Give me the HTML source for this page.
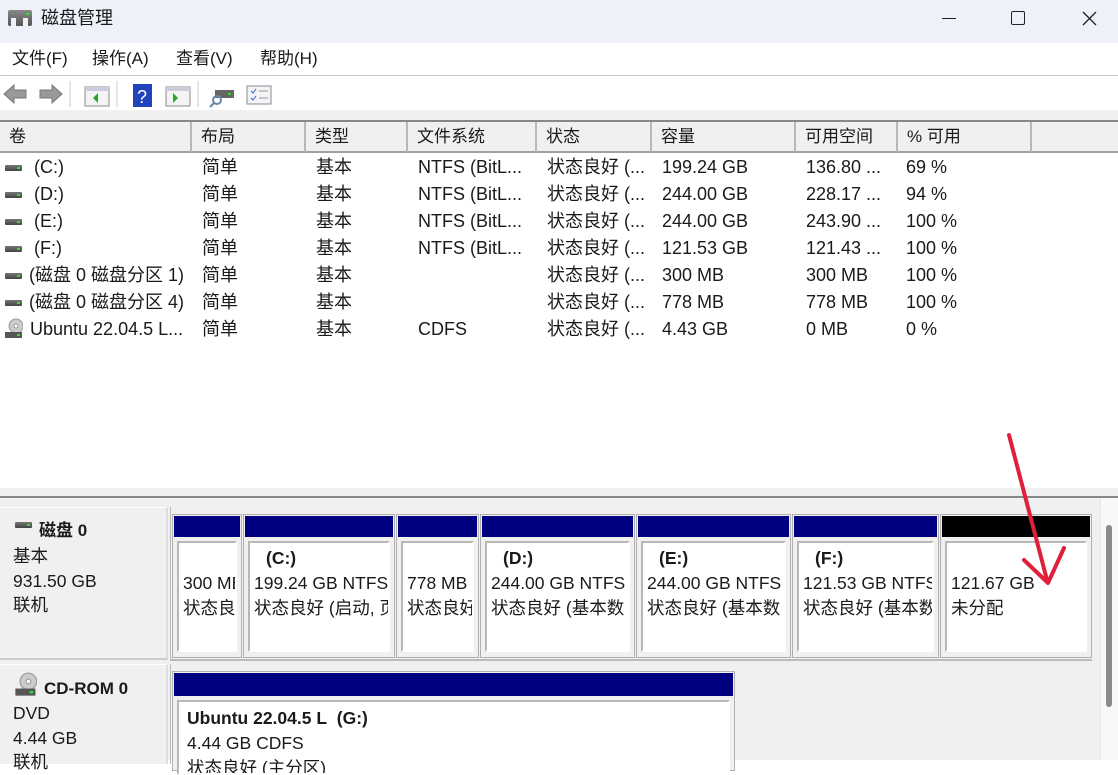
<!DOCTYPE html>
<html><head><meta charset="utf-8"><style>
*{margin:0;padding:0;box-sizing:border-box}
body{width:1118px;height:760px;overflow:hidden;background:#fff;font-family:"Liberation Sans","Noto Sans CJK SC",sans-serif;font-size:17px;color:#1a1a1a;position:relative}
.a{position:absolute;white-space:nowrap;line-height:22px}
.hd{position:absolute;top:122px;height:31px;background:#f0f0f0;border-right:2px solid #b8b8b8;border-bottom:2px solid #a0a0a0;padding:4px 0 0 9px;font-size:17px;line-height:22px}
.row{position:absolute;left:0;width:1040px;height:27px;font-size:18px}
.row span{position:absolute;top:2px;line-height:22px;white-space:nowrap}
.drv{position:absolute;left:5px;top:11px;width:17px;height:6px;background:linear-gradient(#777,#444);border-radius:1px}
.drv:after{content:"";position:absolute;right:2px;top:2px;width:3px;height:2px;background:#3d3}
.cd{position:absolute;left:5px;top:2px;width:18px;height:22px}
.part{position:absolute;top:514px;height:144px;border:1px solid #b0b0b0;background:#f0f0f0}
.bar{position:absolute;left:1px;right:1px;top:1px;height:21px;background:#000080}
.in{position:absolute;left:4px;right:4px;top:26px;bottom:5px;background:#fff;border:2px solid #b8b8b8;border-right-color:#fff;border-bottom-color:#fff;overflow:hidden;padding:0 0 0 4px;font-size:17.5px;line-height:25px;white-space:nowrap}
.in b{display:block;padding-left:12px;margin-top:3px;height:25px}
</style></head><body>
<!-- title -->
<div class="a" style="left:0;top:0;width:1118px;height:43px;background:#eef1f9"></div>
<div class="a" style="left:8px;top:10px;width:24px;height:16px;background:linear-gradient(#888,#555);border-radius:2px"></div>
<div class="a" style="left:11px;top:18px;width:5px;height:8px;background:#eef1f9"></div>
<div class="a" style="left:23px;top:18px;width:5px;height:8px;background:#eef1f9"></div>
<div class="a" style="left:26px;top:13px;width:3px;height:2px;background:#3d3"></div>
<div class="a" style="left:41px;top:7px;font-size:18px">磁盘管理</div>
<div class="a" style="left:942px;top:18px;width:14px;height:1px;background:#222"></div>
<div class="a" style="left:1011px;top:11px;width:14px;height:14px;border:1.5px solid #222;border-radius:2px"></div>
<svg class="a" style="left:1082px;top:11px" width="15" height="15"><path d="M1 1L14 14M14 1L1 14" stroke="#222" stroke-width="1.3"/></svg>
<!-- menu -->
<div class="a" style="left:0;top:43px;width:1118px;height:33px;border-bottom:1px solid #ccc;background:#fff"></div>
<div class="a" style="left:12px;top:48px;font-size:17px">文件(F)</div>
<div class="a" style="left:92px;top:48px;font-size:17px">操作(A)</div>
<div class="a" style="left:176px;top:48px;font-size:17px">查看(V)</div>
<div class="a" style="left:260px;top:48px;font-size:17px">帮助(H)</div>
<!-- toolbar -->
<svg class="a" style="left:0;top:78px" width="290" height="32">
<path d="M4 16L14 7V12H26V20H14V25Z" fill="#999" stroke="#777"/>
<path d="M62 16L52 7V12H40V20H52V25Z" fill="#999" stroke="#777"/>
<line x1="70" y1="3" x2="70" y2="29" stroke="#ccc"/>
<rect x="85" y="9" width="24" height="19" fill="#f4f4f4" stroke="#888"/><rect x="85" y="9" width="24" height="4" fill="#ccd"/><path d="M98 15V25L93 20Z" fill="#2a2"/>
<line x1="117" y1="3" x2="117" y2="29" stroke="#ccc"/>
<rect x="133" y="6" width="19" height="23" fill="#2244bb"/><text x="137" y="25" fill="#fff" font-size="18" font-family="Liberation Sans">?</text>
<rect x="166" y="9" width="24" height="19" fill="#f4f4f4" stroke="#888"/><rect x="166" y="9" width="24" height="4" fill="#ccd"/><path d="M173 15V25L178 20Z" fill="#2a2"/>
<line x1="198" y1="3" x2="198" y2="29" stroke="#ccc"/>
<rect x="215" y="12" width="19" height="8" fill="#666"/><rect x="228" y="15" width="3" height="2" fill="#3d3"/><circle cx="217" cy="22" r="4" fill="none" stroke="#68a" stroke-width="2"/><line x1="214" y1="25" x2="210" y2="29" stroke="#68a" stroke-width="2"/>
<rect x="247" y="8" width="24" height="18" fill="#f4f4f4" stroke="#889"/><path d="M251 13l2 2 3-4M251 20l2 2 3-4" stroke="#36c" fill="none"/><line x1="259" y1="13" x2="268" y2="13" stroke="#999"/><line x1="259" y1="20" x2="268" y2="20" stroke="#999"/>
</svg>
<div class="a" style="left:0;top:110px;width:1118px;height:12px;background:#f0f0f0;border-bottom:2px solid #888"></div>
<!-- headers -->
<div class="hd" style="left:0;width:192px">卷</div>
<div class="hd" style="left:192px;width:114px">布局</div>
<div class="hd" style="left:306px;width:102px">类型</div>
<div class="hd" style="left:408px;width:129px">文件系统</div>
<div class="hd" style="left:537px;width:115px">状态</div>
<div class="hd" style="left:652px;width:144px">容量</div>
<div class="hd" style="left:796px;width:102px">可用空间</div>
<div class="hd" style="left:898px;width:134px">% 可用</div>
<div class="hd" style="left:1032px;width:86px;border-right:none"></div>
<!-- rows -->
<div class="row" style="top:154px"><i class="drv"></i><span style="left:34px">(C:)</span><span style="left:202px">简单</span><span style="left:316px">基本</span><span style="left:418px">NTFS (BitL...</span><span style="left:547px">状态良好 (...</span><span style="left:662px">199.24 GB</span><span style="left:806px">136.80 ...</span><span style="left:906px">69 %</span></div>
<div class="row" style="top:181px"><i class="drv"></i><span style="left:34px">(D:)</span><span style="left:202px">简单</span><span style="left:316px">基本</span><span style="left:418px">NTFS (BitL...</span><span style="left:547px">状态良好 (...</span><span style="left:662px">244.00 GB</span><span style="left:806px">228.17 ...</span><span style="left:906px">94 %</span></div>
<div class="row" style="top:208px"><i class="drv"></i><span style="left:34px">(E:)</span><span style="left:202px">简单</span><span style="left:316px">基本</span><span style="left:418px">NTFS (BitL...</span><span style="left:547px">状态良好 (...</span><span style="left:662px">244.00 GB</span><span style="left:806px">243.90 ...</span><span style="left:906px">100 %</span></div>
<div class="row" style="top:235px"><i class="drv"></i><span style="left:34px">(F:)</span><span style="left:202px">简单</span><span style="left:316px">基本</span><span style="left:418px">NTFS (BitL...</span><span style="left:547px">状态良好 (...</span><span style="left:662px">121.53 GB</span><span style="left:806px">121.43 ...</span><span style="left:906px">100 %</span></div>
<div class="row" style="top:262px"><i class="drv"></i><span style="left:29px">(磁盘 0 磁盘分区 1)</span><span style="left:202px">简单</span><span style="left:316px">基本</span><span style="left:547px">状态良好 (...</span><span style="left:662px">300 MB</span><span style="left:806px">300 MB</span><span style="left:906px">100 %</span></div>
<div class="row" style="top:289px"><i class="drv"></i><span style="left:29px">(磁盘 0 磁盘分区 4)</span><span style="left:202px">简单</span><span style="left:316px">基本</span><span style="left:547px">状态良好 (...</span><span style="left:662px">778 MB</span><span style="left:806px">778 MB</span><span style="left:906px">100 %</span></div>
<div class="row" style="top:316px"><svg class="cd" viewBox="0 0 18 22"><circle cx="11" cy="8" r="7" fill="#ccc" stroke="#999"/><circle cx="11" cy="8" r="2" fill="#fff" stroke="#999"/><rect x="0" y="14" width="17" height="6" fill="#555"/><rect x="12" y="16" width="3" height="2" fill="#3d3"/></svg><span style="left:30px">Ubuntu 22.04.5 L...</span><span style="left:202px">简单</span><span style="left:316px">基本</span><span style="left:418px">CDFS</span><span style="left:547px">状态良好 (...</span><span style="left:662px">4.43 GB</span><span style="left:806px">0 MB</span><span style="left:906px">0 %</span></div>
<!-- splitter -->
<div class="a" style="left:0;top:488px;width:1118px;height:10px;background:#f0f0f0;border-bottom:2px solid #888"></div>
<div class="a" style="left:0;top:498px;width:1118px;height:262px;background:#f0f0f0"></div>
<!-- disk 0 label -->
<div class="a" style="left:0;top:507px;width:168px;height:153px;background:#f0f0f0;border-top:1px solid #fff;border-right:2px solid #ddd;border-bottom:2px solid #ccc"></div>
<div class="drv" style="left:15px;top:522px"></div>
<div class="a" style="left:39px;top:520px;font-weight:bold;font-size:17px">磁盘 0</div>
<div class="a" style="left:13px;top:544px;line-height:24.5px;font-size:17.5px">基本<br>931.50 GB<br>联机</div>
<div class="a" style="left:170px;top:507px;width:922px;height:154px;border-left:1px solid #bbb;border-bottom:2px solid #bbb"></div>
<div class="part" style="left:172px;width:70px"><div class="bar"></div><div class="in"><b>&nbsp;</b>300 MB<br>状态良好</div></div>
<div class="part" style="left:243px;width:152px"><div class="bar"></div><div class="in"><b>(C:)</b>199.24 GB NTFS<br>状态良好 (启动, 页</div></div>
<div class="part" style="left:396px;width:83px"><div class="bar"></div><div class="in"><b>&nbsp;</b>778 MB<br>状态良好</div></div>
<div class="part" style="left:480px;width:155px"><div class="bar"></div><div class="in"><b>(D:)</b>244.00 GB NTFS<br>状态良好 (基本数</div></div>
<div class="part" style="left:636px;width:155px"><div class="bar"></div><div class="in"><b>(E:)</b>244.00 GB NTFS<br>状态良好 (基本数</div></div>
<div class="part" style="left:792px;width:147px"><div class="bar"></div><div class="in"><b>(F:)</b>121.53 GB NTFS<br>状态良好 (基本数</div></div>
<div class="part" style="left:940px;width:152px"><div class="bar" style="background:#000"></div><div class="in"><b>&nbsp;</b>121.67 GB<br>未分配</div></div>
<!-- cd-rom -->
<div class="a" style="left:0;top:664px;width:168px;height:100px;background:#f0f0f0;border-top:1px solid #fff;border-right:2px solid #ddd"></div>
<svg class="a" style="left:15px;top:672px" width="22" height="26" viewBox="0 0 18 22"><circle cx="11" cy="8" r="7" fill="#ccc" stroke="#999"/><circle cx="11" cy="8" r="2" fill="#fff" stroke="#999"/><rect x="0" y="14" width="17" height="6" fill="#555"/><rect x="12" y="16" width="3" height="2" fill="#3d3"/></svg>
<div class="a" style="left:44px;top:678px;font-weight:bold">CD-ROM 0</div>
<div class="a" style="left:13px;top:701px;line-height:24.5px;font-size:17.5px">DVD<br>4.44 GB<br>联机</div>
<div class="a" style="left:170px;top:664px;width:572px;height:100px;border-left:1px solid #bbb"></div>
<div class="part" style="left:172px;top:671px;width:563px;height:100px"><div class="bar" style="height:23px"></div><div class="in" style="top:28px;bottom:-5px;padding-left:8px"><b style="padding-left:0;margin-top:4px">Ubuntu 22.04.5 L&nbsp; (G:)</b>4.44 GB CDFS<br>状态良好 (主分区)</div></div>
<!-- scrollbar -->
<div class="a" style="left:1100px;top:498px;width:18px;height:262px;background:#f8f8f8;border-left:1px solid #e6e6e6"></div>
<div class="a" style="left:1106px;top:525px;width:6px;height:182px;background:#8a8a8a;border-radius:3px"></div>
<!-- arrow -->
<svg class="a" style="left:0;top:0" width="1118" height="760"><path d="M1009 435L1047 580M1024 560L1048 583L1064 548" stroke="#e0203a" stroke-width="4" fill="none" stroke-linecap="round" stroke-linejoin="round"/></svg>
</body></html>
